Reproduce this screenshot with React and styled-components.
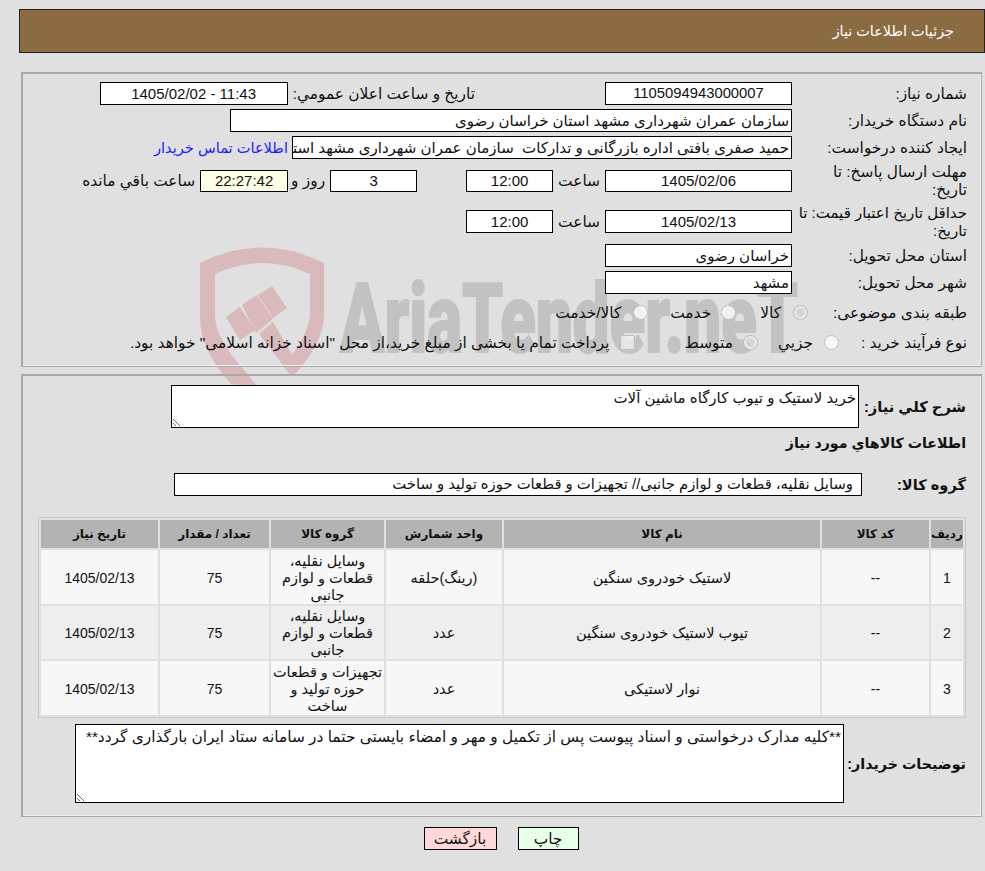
import React from "react";
import styled, { createGlobalStyle } from "styled-components";

const GlobalStyle = createGlobalStyle`
  html, body {
    margin: 0;
    padding: 0;
    background: #e0e0e0;
  }
  body {
    font-family: "Liberation Sans", "DejaVu Sans", sans-serif;
    font-size: 15.4px;
    color: #111;
  }
`;

const Page = styled.div`
  position: relative;
  box-sizing: border-box;
  width: 985px;
  height: 871px;
  padding: 9px 0 0 19px;
  overflow: hidden;
  direction: rtl;
`;

//WATERMARK
const Watermark = styled.svg`
  position: absolute;
  top: 0;
  left: 0;
  pointer-events: none;
`;

const WatermarkText = styled.text`
  font-family: "Roboto", sans-serif;
  font-weight: 900;
  font-size: 96px;
  fill: #c2c2c2;
  stroke: #c2c2c2;
  stroke-width: 2px;
  direction: ltr;
`;

//HEADER
const Header = styled.header`
  box-sizing: border-box;
  height: 44px;
  background: #8b6b42;
  border: 1px solid #222;
  padding: 0 30px;
  display: flex;
  align-items: center;
  color: #fff;
  font-size: 14.4px;
  position: relative;
`;

//PANELS
const Panel = styled.section`
  position: relative;
  box-sizing: border-box;
  margin: ${(p) => p.$top}px 3px 0 2px;
  height: ${(p) => p.$height}px;
  padding: ${(p) => p.$padding};
  border: 1px solid #a8a8a8;
  border-top-width: 2px;
  border-left-width: 2px;
  box-shadow: inset -1px -1px 0 #efefef;
`;

const Row = styled.div`
  display: flex;
  align-items: center;
  min-height: ${(p) => p.$height || 23}px;
  margin-top: ${(p) => p.$top || 0}px;
  margin-bottom: ${(p) => (p.$gap === undefined ? 4 : p.$gap)}px;
`;

const Label = styled.div`
  flex: 0 0 175px;
  box-sizing: border-box;
  padding-left: 5px;
  line-height: 18px;
  font-size: ${(p) => p.$size || 15.4}px;
`;

const InlineLabel = styled.div`
  margin: ${(p) => p.$margin || "0 5px"};
  white-space: nowrap;
`;

const Field = styled.div`
  box-sizing: border-box;
  flex: 0 0 ${(p) => p.$width}px;
  height: ${(p) => p.$h || 23}px;
  line-height: ${(p) => (p.$h || 23) - 2}px;
  background: ${(p) => p.$bg || "#fff"};
  border: 1px solid #000;
  padding: 0 ${(p) => p.$pad ?? 2}px;
  margin: ${(p) => p.$margin || "0"};
  text-align: ${(p) => (p.$center ? "center" : "right")};
  font-size: ${(p) => p.$size || 15}px;
  white-space: pre;
  overflow: hidden;
`;

const BuyerLink = styled.a`
  color: #1a1aff;
  margin-right: 4px;
  font-size: 14.6px;
  text-decoration: none;
  white-space: nowrap;
`;

const RadioGroup = styled.div`
  display: flex;
  align-items: center;
`;

const Radio = styled.input`
  appearance: none;
  box-sizing: border-box;
  width: 15px;
  height: 15px;
  margin: ${(p) => p.$margin || "0"};
  border-radius: 50%;
  border: 1px solid #bdbdbd;
  background: ${(p) => (p.checked ? "#d4d4d4" : "rgba(255,255,255,0.75)")};
  box-shadow: ${(p) => (p.checked ? "inset 0 0 0 2px #ececec" : "none")};
`;

const CheckBox = styled.input`
  appearance: none;
  box-sizing: border-box;
  width: 15px;
  height: 15px;
  margin: ${(p) => p.$margin || "0"};
  border-radius: 2px;
  border: 1px solid #bdbdbd;
  background: rgba(240, 240, 240, 0.75);
`;

const Option = styled.span`
  margin: ${(p) => p.$margin || "0"};
  white-space: nowrap;
`;

const BoldLabel = styled.div`
  font-weight: 700;
  font-size: ${(p) => p.$size}px;
  flex: 0 0 ${(p) => p.$width}px;
  white-space: nowrap;
`;

const TextBox = styled.textarea`
  box-sizing: border-box;
  flex: 0 0 ${(p) => p.$width}px;
  height: ${(p) => p.$h}px;
  margin: 0;
  padding: 3px 2px 2px;
  border: 1px solid #000;
  border-radius: 0;
  outline: none;
  background: #fff;
  color: #111;
  font-family: "Liberation Sans", "DejaVu Sans", sans-serif;
  font-size: ${(p) => p.$size}px;
  resize: both;
  direction: rtl;
`;

const Heading = styled.div`
  font-weight: 700;
  font-size: 14.2px;
  line-height: 20px;
`;

//TABLE
const Table = styled.table`
  width: 928px;
  border-collapse: separate;
  border-spacing: 2px;
  border: 1px solid #c8c8c8;
  table-layout: fixed;
  text-align: center;
`;

const Th = styled.th`
  background: #b3b3b3;
  height: 28px;
  padding: 0;
  font-size: 12px;
  font-weight: 700;
`;

const Td = styled.td`
  background: ${(p) => (p.$alt ? "#eeeeee" : "#f7f7f7")};
  height: ${(p) => p.$h}px;
  box-sizing: border-box;
  padding: 2px 1px 0;
  line-height: 17px;
  font-size: ${(p) => (p.$num ? 14 : 14.5)}px;
`;

//BUTTONS
const Buttons = styled.div`
  display: flex;
  justify-content: center;
  gap: 21px;
  margin-top: 10px;
  padding-right: 2px;
`;

const Button = styled.button`
  box-sizing: border-box;
  width: ${(p) => p.$width}px;
  height: 23px;
  padding: 0;
  border: 1px solid #000;
  background: ${(p) => p.$bg};
  color: #111;
  font-family: inherit;
  font-size: 15.4px;
`;

const Shield = () => (
  <g fill="#d9b9bb">
    <path d="M200 263 Q262 232 324 263 L324 318 Q322 345 293 376 L283 366 Q310 335 310 312 L310 274 Q262 252 215 274 L215 316 Q216 340 246 372 L257 386 L231 384 Q200 350 200 318 Z" />
    <polygon points="226,317 240,307 255,330 240,340" />
    <polygon points="242,305 257,295 273,319 256,333" />
    <polygon points="258,295 272,286 287,308 273,318" />
    <polygon points="259,334 273,322 300,368 292,377" />
  </g>
);

const rows = [
  { id: 1, name: "لاستیک خودروی سنگین", unit: "(رینگ)حلقه", group: "وسایل نقلیه، قطعات و لوازم جانبی", h: 54 },
  { id: 2, name: "تیوب لاستیک خودروی سنگین", unit: "عدد", group: "وسایل نقلیه، قطعات و لوازم جانبی", h: 53 },
  { id: 3, name: "نوار لاستیکی", unit: "عدد", group: "تجهیزات و قطعات حوزه تولید و ساخت", h: 54 },
];

export default function App() {
  return (
    <>
      <GlobalStyle />
      <Page>
        <Watermark width="985" height="400" viewBox="0 0 985 400">
          <Shield />
          <WatermarkText x="340" y="352" textLength="458" lengthAdjust="spacingAndGlyphs">
            AriaTender.neT
          </WatermarkText>
        </Watermark>

        <Header>جزئیات اطلاعات نیاز</Header>

        <Panel $top={19} $height={295} $padding="8px 14px 0 0">
          <Row>
            <Label>شماره نیاز:</Label>
            <Field $width={187} $center $size={14.8}>1105094943000007</Field>
            <InlineLabel $margin="0 130px 0 5px">تاریخ و ساعت اعلان عمومي:</InlineLabel>
            <Field $width={188} $center>11:43 - 1405/02/02</Field>
          </Row>
          <Row>
            <Label>نام دستگاه خریدار:</Label>
            <Field $width={562}>سازمان عمران شهرداری مشهد استان خراسان رضوی</Field>
          </Row>
          <Row>
            <Label>ایجاد کننده درخواست:</Label>
            <Field $width={500}>حمید صفری بافتی اداره بازرگانی و تدارکات  سازمان عمران شهرداری مشهد استان خراسان رضوی</Field>
            <BuyerLink href="#">اطلاعات تماس خریدار</BuyerLink>
          </Row>
          <Row $height={36}>
            <Label>مهلت ارسال پاسخ: تا تاریخ:</Label>
            <Field $width={187} $h={22} $center>1405/02/06</Field>
            <InlineLabel>ساعت</InlineLabel>
            <Field $width={87} $h={22} $center>12:00</Field>
            <Field $width={87} $h={22} $center $margin="0 49px 0 0">3</Field>
            <InlineLabel $margin="0 5px 0 3px">روز و</InlineLabel>
            <Field $width={88} $h={22} $bg="#ffffe8" $center>22:27:42</Field>
            <InlineLabel>ساعت باقي مانده</InlineLabel>
          </Row>
          <Row $height={37}>
            <Label $size={15}>حداقل تاریخ اعتبار قیمت: تا تاریخ:</Label>
            <Field $width={187} $center>1405/02/13</Field>
            <InlineLabel>ساعت</InlineLabel>
            <Field $width={87} $center>12:00</Field>
          </Row>
          <Row>
            <Label>استان محل تحویل:</Label>
            <Field $width={187}>خراسان رضوی</Field>
          </Row>
          <Row $gap={7}>
            <Label>شهر محل تحویل:</Label>
            <Field $width={187}>مشهد</Field>
          </Row>
          <Row $gap={7}>
            <Label>طبقه بندی موضوعی:</Label>
            <RadioGroup>
              <Radio type="radio" disabled checked readOnly $margin="0 -16px 0 0" />
              <Option $margin="0 12px 0 0">کالا</Option>
              <Radio type="radio" disabled readOnly $margin="0 24px 0 0" />
              <Option $margin="0 10px 0 0">خدمت</Option>
              <Radio type="radio" disabled readOnly $margin="0 22px 0 0" />
              <Option $margin="0 12px 0 0">کالا/خدمت</Option>
            </RadioGroup>
          </Row>
          <Row>
            <Label>نوع فرآیند خرید :</Label>
            <RadioGroup>
              <Radio type="radio" disabled readOnly $margin="0 -47px 0 0" />
              <Option $margin="0 11px 0 0">جزيي</Option>
              <Radio type="radio" disabled checked readOnly $margin="0 20px 0 0" />
              <Option $margin="0 10px 0 0">متوسط</Option>
              <CheckBox type="checkbox" disabled readOnly $margin="0 50px 0 0" />
              <Option $margin="0 10px 0 0">پرداخت تمام یا بخشی از مبلغ خرید،از محل "اسناد خزانه اسلامی" خواهد بود.</Option>
            </RadioGroup>
          </Row>
        </Panel>

        <Panel $top={7} $height={443} $padding="9px 15px 0 0">
          <Row $gap={3}>
            <BoldLabel $width={107} $size={14.7}>شرح کلي نياز:</BoldLabel>
            <TextBox $width={688} $h={43} $size={15} readOnly value="خرید لاستیک و تیوب کارگاه ماشین آلات" />
          </Row>
          <Row $gap={19}>
            <Heading>اطلاعات کالاهاي مورد نياز</Heading>
          </Row>
          <Row $gap={21}>
            <BoldLabel $width={104} $size={14.6}>گروه کالا:</BoldLabel>
            <Field $width={688} $pad={8} $size={14.8}>وسایل نقلیه، قطعات و لوازم جانبی// تجهیزات و قطعات حوزه تولید و ساخت</Field>
          </Row>
          <Table>
            <colgroup>
              <col style={{ width: 32 }} />
              <col style={{ width: 107 }} />
              <col style={{ width: 316 }} />
              <col style={{ width: 116 }} />
              <col style={{ width: 113 }} />
              <col style={{ width: 109 }} />
              <col />
            </colgroup>
            <thead>
              <tr>
                <Th>ردیف</Th>
                <Th>کد کالا</Th>
                <Th>نام کالا</Th>
                <Th>واحد شمارش</Th>
                <Th>گروه کالا</Th>
                <Th>تعداد / مقدار</Th>
                <Th>تاریخ نیاز</Th>
              </tr>
            </thead>
            <tbody>
              {rows.map((r, i) => (
                <tr key={r.id}>
                  <Td $h={r.h} $alt={i === 1} $num>{r.id}</Td>
                  <Td $h={r.h} $alt={i === 1} $num>--</Td>
                  <Td $h={r.h} $alt={i === 1}>{r.name}</Td>
                  <Td $h={r.h} $alt={i === 1}>{r.unit}</Td>
                  <Td $h={r.h} $alt={i === 1}>{r.group}</Td>
                  <Td $h={r.h} $alt={i === 1} $num>75</Td>
                  <Td $h={r.h} $alt={i === 1} $num>1405/02/13</Td>
                </tr>
              ))}
            </tbody>
          </Table>
          <Row $gap={0} $top={6}>
            <BoldLabel $width={122} $size={14.3}>توضیحات خریدار:</BoldLabel>
            <TextBox
              $width={769}
              $h={79}
              $size={15.4}
              readOnly
              value="**کلیه مدارک درخواستی و اسناد پیوست پس از تکمیل و مهر و امضاء بایستی حتما در سامانه ستاد ایران بارگذاری گردد**"
            />
          </Row>
        </Panel>

        <Buttons>
          <Button $width={61} $bg="#e8ffe8">چاپ</Button>
          <Button $width={73} $bg="#ffd9d9">بازگشت</Button>
        </Buttons>
      </Page>
    </>
  );
}
